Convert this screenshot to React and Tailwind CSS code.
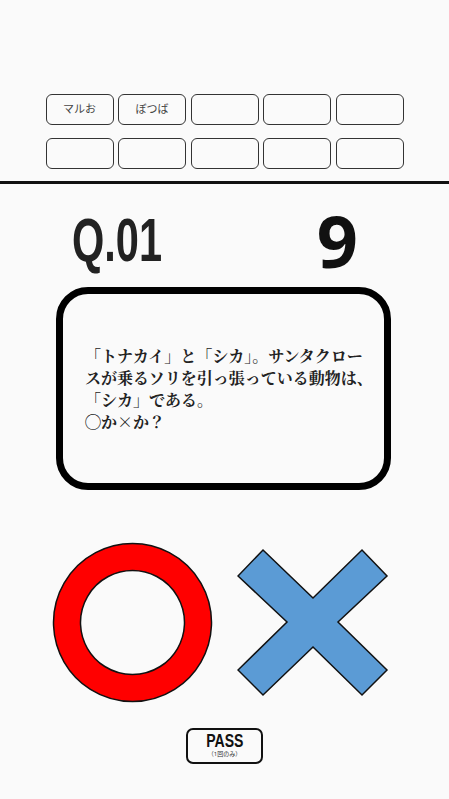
import React from 'react'

const slots = ['マルお', 'ぼつば', '', '', '', '', '', '', '', '']

function Maru() {
  return (
    <svg width="161" height="161" viewBox="0 0 161 161">
      <path
        fillRule="evenodd"
        d="M80.5 1.5a79 79 0 1 0 0.01 0Z M80.5 28.5a52 52 0 1 1 -0.01 0Z"
        fill="#ff0000"
        stroke="#111"
        strokeWidth="1.5"
      />
    </svg>
  )
}

function Batsu() {
  // points measured from the reference, shifted into a 152x150 box
  const pts = [
    [26, 2], [76, 50], [125, 2], [150, 28], [101, 74], [150, 122],
    [125, 147], [76, 99], [26, 147], [1, 122], [50, 74], [1, 28],
  ]
  return (
    <svg width="152" height="150" viewBox="0 0 152 150">
      <polygon
        points={pts.map(p => p.join(',')).join(' ')}
        fill="#5b9bd5"
        stroke="#111"
        strokeWidth="1.5"
        strokeLinejoin="miter"
      />
    </svg>
  )
}

export default function App() {
  return (
    <div className="min-h-[799px] w-full bg-[#fafafa] font-['Noto_Sans','Noto_Sans_CJK_JP',sans-serif] text-[#222]">
      {/* answer slots */}
      <div className="pt-[94px]">
        <div className="mx-auto grid w-[358px] grid-cols-5 gap-x-[4.5px] gap-y-[13px]">
          {slots.map((s, i) => (
            <div
              key={i}
              className="flex h-[31px] items-center justify-center rounded-[6px] border-[1.5px] border-[#333] text-[11px] text-[#444]"
            >
              {s}
            </div>
          ))}
        </div>
      </div>

      <div className="mt-[12px] h-[3px] w-full bg-[#111]" />

      {/* question header */}
      <div className="mt-[26px] flex h-[60px] items-center justify-between pl-[72px] pr-[91px]">
        <span className="inline-block origin-left scale-x-[0.67] font-['Liberation_Sans',sans-serif] text-[62px] font-bold leading-none text-[#222]">
          Q.01
        </span>
        <span className="font-['Noto_Sans',sans-serif] text-[72px] font-bold leading-none text-[#111]">
          9
        </span>
      </div>

      {/* question card */}
      <div className="ml-[56px] mt-[17px] flex h-[203px] w-[335px] items-center rounded-[32px] border-[7px] border-black bg-[#fafafa] pl-[22px]">
        <p className="font-['Noto_Serif_CJK_JP','Liberation_Serif','Noto_Sans_CJK_JP',serif] text-[16px] font-bold leading-[22px] text-[#222]">
          「トナカイ」と「シカ」。サンタクロー<br />
          スが乗るソリを引っ張っている動物は、<br />
          「シカ」である。<br />
          ◯か×か？
        </p>
      </div>

      {/* answer buttons */}
      <div className="mt-[52px] flex items-center gap-[24px] pl-[52px]">
        <Maru />
        <Batsu />
      </div>

      {/* pass */}
      <div className="mt-[25px] flex justify-center">
        <div className="flex h-[36px] w-[77px] flex-col items-center justify-center rounded-[7px] border-2 border-[#111] bg-[#fafafa]">
          <span className="inline-block scale-x-[0.78] font-['Liberation_Sans',sans-serif] text-[18px] font-bold leading-[15px] text-[#111]">
            PASS
          </span>
          <span className="mt-[2px] text-[6px] leading-[7px] text-[#333]">（1回のみ）</span>
        </div>
      </div>
    </div>
  )
}
